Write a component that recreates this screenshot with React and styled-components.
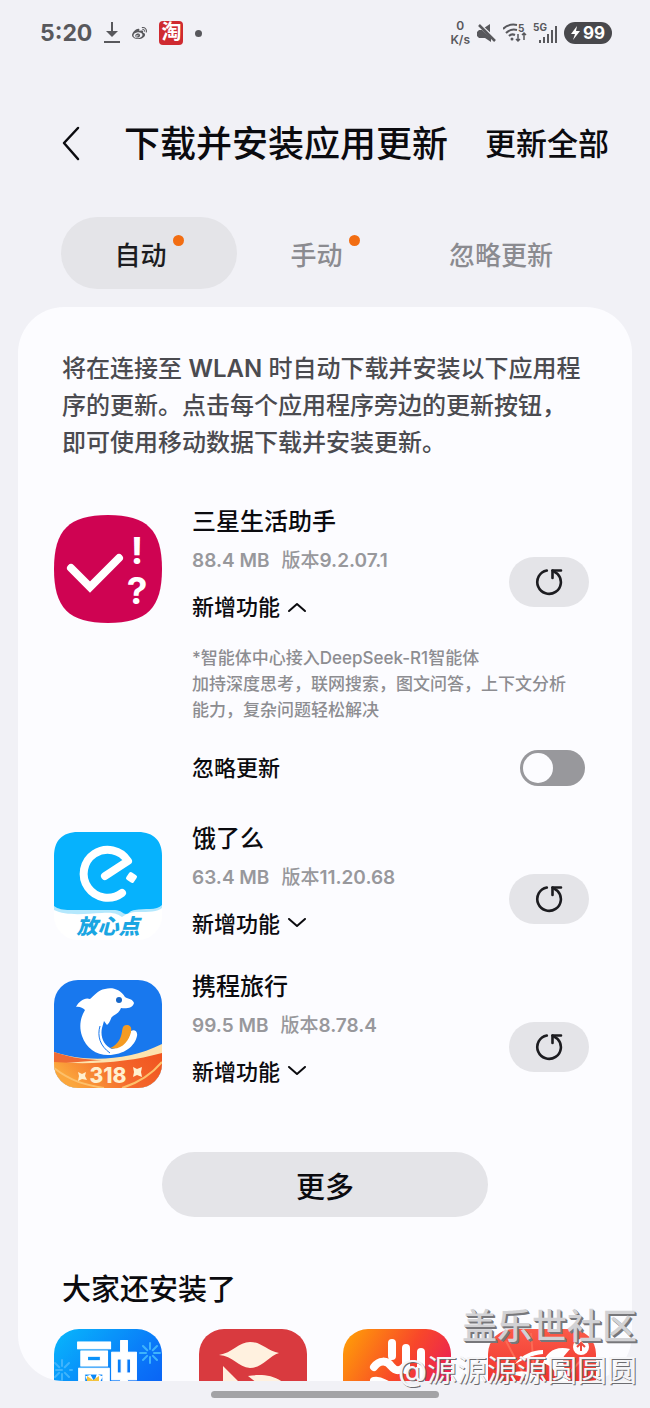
import React, { useState } from "react";
import styled, { createGlobalStyle } from "styled-components";
import { FaWeibo } from "react-icons/fa";

const GlobalStyle = createGlobalStyle`
  * {
    box-sizing: border-box;
  }

  body {
    margin: 0;
    background-color: #f1f1f6;
    font-family: Inter, "Noto Sans CJK SC", sans-serif;
    font-weight: 500;
    color: #0b0b0f;
  }

  button {
    border: none;
    padding: 0;
    background: none;
    color: inherit;
    font: inherit;
    cursor: pointer;
  }

  h1, h2, h3, p {
    margin: 0;
    font-weight: 500;
  }

  b {
    font-weight: 600;
  }

  svg {
    display: block;
    flex-shrink: 0;
  }
`;

const Screen = styled.div`
  position: relative;
  display: flex;
  flex-direction: column;
  height: 100vh;
  overflow: hidden;
`;

const StatusBar = styled.div`
  display: flex;
  justify-content: space-between;
  align-items: center;
  height: 66px;
  flex-shrink: 0;
  padding: 0 38px 0 40px;
  color: #58585c;
`;

const StatusGroup = styled.div`
  display: flex;
  align-items: center;
  gap: ${(props) => props.$gap}px;
`;

const Clock = styled.span`
  font-size: 23px;
  font-weight: 700;
`;

const TaobaoBadge = styled.span`
  width: 24px;
  height: 24px;
  border-radius: 4px;
  background-color: #cf2a30;
  color: white;
  font-size: 20px;
  font-weight: 700;
  line-height: 23px;
  text-align: center;
`;

const Dot = styled.span`
  width: ${(props) => props.$size}px;
  height: ${(props) => props.$size}px;
  border-radius: 50%;
  background-color: ${(props) => props.$color};
`;

const NetSpeed = styled.span`
  font-size: 12px;
  font-weight: 600;
  line-height: 14px;
  text-align: center;
`;

const Battery = styled.span`
  display: flex;
  align-items: center;
  justify-content: center;
  gap: 3px;
  width: 48px;
  height: 22px;
  border-radius: 11px;
  background-color: #48484c;
  color: white;
  font-size: 17px;
  font-weight: 700;
`;

const Header = styled.header`
  display: flex;
  align-items: center;
  height: 72px;
  flex-shrink: 0;
  margin: 42px 41px 37px 61px;
`;

const Title = styled.h1`
  flex: 1;
  margin-left: 43px;
  font-size: 36px;
  line-height: 48px;
  white-space: nowrap;
`;

const UpdateAll = styled.button`
  line-height: 48px;
  white-space: nowrap;

  && {
    font-size: 31px;
  }
`;

const Tabs = styled.nav`
  display: flex;
  flex-shrink: 0;
  margin: 0 61px 18px;
`;

const Tab = styled.button`
  display: flex;
  flex: 1;
  justify-content: center;
  align-items: center;
  gap: 6px;
  height: 72px;
  border-radius: 36px;
  background-color: ${(props) => (props.$active ? "#e4e4e8" : "transparent")};
  color: ${(props) => (props.$active ? "#1c1c20" : "#8b8b90")};

  && {
    font-size: 26px;
  }

  & ${Dot} {
    margin-bottom: 26px;
  }
`;

const Card = styled.main`
  flex: 1;
  min-height: 0;
  margin: 0 18px;
  padding: 43px 36px 0;
  border-radius: 46px;
  background-color: #fcfcff;
  overflow: hidden;
`;

const Description = styled.p`
  margin: 0 8px 43px;
  color: #4b4b50;
  font-size: 24px;
  line-height: 37px;
  white-space: nowrap;
`;

const AppItem = styled.section`
  margin-bottom: 29px;
`;

const AppRow = styled.div`
  display: flex;
  align-items: flex-end;
`;

const AppInfo = styled.div`
  flex: 1;
  margin-left: 30px;
`;

const AppName = styled.h2`
  font-size: 24px;
  line-height: 36px;
`;

const AppMeta = styled.p`
  display: flex;
  gap: 12px;
  margin: 6px 0 15px;
  color: #98989c;
  font-size: 19px;
  line-height: 30px;
`;

const WhatsNew = styled.button`
  display: flex;
  align-items: center;
  gap: 7px;

  && {
    font-size: 22px;
    line-height: 32px;
  }
`;

const RefreshButton = styled.button`
  display: flex;
  justify-content: center;
  align-items: center;
  width: 80px;
  height: 50px;
  margin: 0 7px 16px 0;
  border-radius: 25px;
  background-color: #e4e4e8;
`;

const Details = styled.div`
  margin: 22px 0 0 138px;
  padding-bottom: 6px;
`;

const Notes = styled.p`
  color: #8d8d91;
  font-size: 17px;
  line-height: 26px;
`;

const IgnoreRow = styled.label`
  display: flex;
  justify-content: space-between;
  align-items: center;
  margin: 27px 11px 0 0;
  font-size: 22px;
  line-height: 36px;
`;

const Switch = styled.input`
  appearance: none;
  width: 65px;
  height: 36px;
  margin: 0;
  padding: 3px;
  border-radius: 18px;
  background-color: ${(props) => (props.checked ? "#3e7bf0" : "#98989c")};
  cursor: pointer;

  &::before {
    content: "";
    display: block;
    width: 30px;
    height: 30px;
    margin-left: ${(props) => (props.checked ? "29px" : "0")};
    border-radius: 50%;
    background-color: #fcfcff;
  }
`;

const MoreButton = styled.button`
  display: block;
  width: 60%;
  height: 65px;
  margin: 64px auto 52px;
  border-radius: 33px;
  background-color: #e4e4e8;

  && {
    font-size: 29px;
  }
`;

const SectionTitle = styled.h3`
  margin: 0 8px 18px;
  font-size: 29px;
  line-height: 42px;
`;

const Shelf = styled.div`
  display: flex;
  justify-content: space-between;
`;

const HomeArea = styled.footer`
  display: flex;
  justify-content: center;
  align-items: center;
  flex-shrink: 0;
  height: 27px;
`;

const HomeBar = styled.div`
  width: 35%;
  height: 7px;
  border-radius: 4px;
  background-color: #a3a3a6;
`;

const Watermark = styled.div`
  position: absolute;
  right: 13px;
  bottom: 16px;
  color: #f6f6f8;
  font-size: 30px;
  font-weight: 400;
  line-height: 44px;
  text-align: right;
  text-shadow: 1px 1px 0 #6c6c70;
  pointer-events: none;
`;

const WatermarkTitle = styled.div`
  color: #d2d2d5;
  font-size: 35px;
  font-weight: 500;
  text-shadow: 1px 1px 0 #77777b, 2px 2px 0 #77777b;
`;

function SignalIcons() {
  return (
    <>
      <svg width="19" height="19" viewBox="0 0 19 19" fill="currentColor">
        <path d="M0 8l2-2h3l9 8v4l-6-4H2l-2-2zM7 4l6-4v9z" />
        <path d="M3 0l17 16" stroke="#f1f1f6" strokeWidth="1.500" />
        <path d="M2 1l16 16" stroke="currentColor" strokeWidth="2.500" />
      </svg>
      <svg width="24" height="20" viewBox="0 0 24 20" fill="none" stroke="currentColor" strokeWidth="2">
        <path d="M0 6C4 2 9 1 14 2M3 10c3-3 7-4 11-3M6 13c2-2 4-2 6-1" />
        <circle cx="9" cy="16" r="1.500" fill="currentColor" stroke="none" />
        <path d="M15 11v7m-2-2l2 2 2-2M21 17v-7m-2 2l2-2 2 2" strokeWidth="1.500" />
        <text x="15" y="9" fill="currentColor" stroke="none" fontSize="10" fontWeight="700">5</text>
      </svg>
      <svg width="23" height="22" viewBox="0 0 23 22" fill="currentColor" overflow="visible">
        <text x="-1" y="9" fontSize="10" fontWeight="700">5G</text>
        <path d="M5 18h2v3H5zM9 15h2v6H9zM13 12h2v9h-2zM17 8h2v13h-2zM21 4h2v17h-2z" />
      </svg>
    </>
  );
}

function Chevron({ up }) {
  return (
    <svg width="20" height="12" viewBox="0 0 20 12" fill="none" stroke="currentColor" strokeWidth="2" strokeLinecap="round" strokeLinejoin="round">
      <path d={up ? "M2 10l8-7 8 7" : "M2 1l8 7 8-7"} />
    </svg>
  );
}

function RefreshIcon() {
  return (
    <svg width="28" height="28" viewBox="0 0 28 28" fill="none" stroke="#1c1c20" strokeWidth="2.600" strokeLinecap="round" strokeLinejoin="round">
      <path d="M11.800 2.500A11.800 11.800 0 1 0 22.500 5.800L17.500 2.500" />
      <path d="M17.500 10V2.500H26" />
    </svg>
  );
}

function SamsungIcon() {
  return (
    <svg width="108" height="108" viewBox="0 0 108 108">
      <path d="M54 0C93 0 108 15 108 54S93 108 54 108 0 93 0 54 15 0 54 0Z" fill="#cf0352" />
      <path d="M17 53l19 19 29-29" fill="none" stroke="white" strokeWidth="8" strokeLinecap="round" />
      <g fill="white" fontSize="37" fontWeight="700" textAnchor="middle">
        <text x="83" y="49">!</text>
        <text x="83" y="89">?</text>
      </g>
    </svg>
  );
}

function ElemeIcon() {
  return (
    <svg width="108" height="108" viewBox="0 0 108 108">
      <rect width="108" height="108" rx="24" fill="white" />
      <path d="M0 60v18c12 6 30 4 48 3 14-1 16 2 20 4 4-3 9-5 16-5 10 0 20 0 24-4V60z" fill="#b4e8fd" />
      <path d="M24 0h60c16 0 24 9 24 24v49c-5 6-18 3-27 5-5 0-6 4-9 4s-5-4-11-4H16C9 78 4 77 0 74V24C0 9 8 0 24 0z" fill="#06b2fd" />
      <path d="M68 61A24 24 0 1 1 74 29L51 44" fill="none" stroke="white" strokeWidth="8" strokeLinecap="round" strokeLinejoin="round" />
      <rect x="73" y="41" width="9" height="9" rx="2" fill="white" transform="rotate(35 77.500 45.500)" />
      <text x="54" y="102" fill="#1aa6e2" fontSize="21" fontWeight="900" fontStyle="italic" textAnchor="middle">放心点</text>
    </svg>
  );
}

function CtripIcon() {
  return (
    <svg width="108" height="108" viewBox="0 0 108 108">
      <defs>
        <clipPath id="ctripClip">
          <rect width="108" height="108" rx="24" />
        </clipPath>
        <linearGradient id="ctripBand" x1="0" x2="1" y1="0.300" y2="0">
          <stop offset="0" stopColor="#fba63c" />
          <stop offset="0.500" stopColor="#f4682c" />
          <stop offset="1" stopColor="#f0531f" />
        </linearGradient>
      </defs>
      <g clipPath="url(#ctripClip)">
        <rect width="108" height="108" fill="#1878ee" />
        <path d="M0 72c30 10 72 10 108-8v44H0z" fill="#fde3ae" />
        <path d="M0 72c18 6 34 8 48 8L0 84z" fill="#ee6a35" />
        <path d="M0 82c38 3 76 0 108-9v35H0z" fill="url(#ctripBand)" />
        <path d="M0 88c18 14 32 17 50 20M108 82C98 94 84 103 68 108" fill="none" stroke="#fdc06a" strokeWidth="2" />
        <path d="M80 23C79 19 74 19 71 17 66 9 58 7 51 9 44 10 40 16 36 19 31 17 25 21 22 27c3-1 7 1 9 3-5 8-6 17-3 26 4 12 14 19 26 19 16 0 27-9 29-19 1-5-3-7-6-5-3 9-9 16-19 18-8-3-12-12-10-21l2-7 3 4c4-3 3-7 6-9 4-2 7-5 8-8 5 1 12 0 13-5z" fill="white" />
        <path d="M73 45c-6 0-4 6-6 11-2 6-6 10-11 12 11 3 19-7 21-16 1-5-1-7-4-7z" fill="#f49b22" />
        <path d="M46 46c-3 10 0 20 10 27" fill="none" stroke="#1878ee" strokeWidth="1" />
        <circle cx="65" cy="20" r="3" fill="#1767c8" />
      </g>
      <text x="54" y="103" fill="#fff0cf" fontSize="21" fontWeight="800" textAnchor="middle">318</text>
      <path d="M24 92l4 2 4-2-1 4 2 4-5-1-4 2 1-5zM79 87l4 2 5-2-1 5 1 5-5-2-4 2 1-5z" fill="#fff0cf" />
    </svg>
  );
}

function FinanceIcon() {
  return (
    <svg width="108" height="108" viewBox="0 0 108 108">
      <defs>
        <linearGradient id="finance" x1="0" x2="1" y1="0" y2="1">
          <stop offset="0" stopColor="#08b8fc" />
          <stop offset="0.600" stopColor="#0a70f8" />
          <stop offset="1" stopColor="#0a50f0" />
        </linearGradient>
      </defs>
      <rect width="108" height="108" rx="25" fill="url(#finance)" />
      <g stroke="#3fb4fc" strokeWidth="2" strokeLinecap="round" strokeDasharray="6 8">
        <path d="M96 14v20M86 24h20M89 17l14 14M103 17L89 31M8 31v20M2 41h16M1 34l14 14M15 34L1 48" />
      </g>
      <text x="54" y="67" fill="white" stroke="white" strokeWidth="1" strokeLinejoin="round" fontSize="66" fontWeight="700" textAnchor="middle">融</text>
      <path d="M33 54v-7l6 4 6-4v7z" fill="#f4c33e" />
    </svg>
  );
}

function LeafIcon() {
  return (
    <svg width="108" height="108" viewBox="0 0 108 108">
      <rect width="108" height="108" rx="25" fill="#d93a3f" />
      <path d="M20 26c13-2 20-13 31-13 12 0 17 9 29 11-10 3-17 15-29 15-12-1-17-12-31-13zM24 37l17 17H24zM49 47c13-2 26-1 36 7H58z" fill="#fff1df" />
    </svg>
  );
}

function HandIcon() {
  return (
    <svg width="108" height="108" viewBox="0 0 108 108">
      <defs>
        <linearGradient id="hand" x1="0" x2="1" y1="0.100" y2="0.700">
          <stop offset="0" stopColor="#ff9c08" />
          <stop offset="0.500" stopColor="#f8472a" />
          <stop offset="1" stopColor="#e51264" />
        </linearGradient>
      </defs>
      <rect width="108" height="108" rx="25" fill="url(#hand)" />
      <path d="M49 14v13M63 19v22M78 23v31M31 38c5-7 13-7 17-1 5 6 10 5 14 0M31 52c9-2 10 6 22 5" fill="none" stroke="white" strokeWidth="8" strokeLinecap="round" />
    </svg>
  );
}

function BirdIcon() {
  return (
    <svg width="108" height="108" viewBox="0 0 108 108">
      <defs>
        <linearGradient id="bird" x1="0" x2="0" y1="0" y2="0.500">
          <stop offset="0" stopColor="#fb5b48" />
          <stop offset="1" stopColor="#ef322d" />
        </linearGradient>
      </defs>
      <rect width="108" height="108" rx="25" fill="url(#bird)" />
      <path d="M18 12l22 42M43 4l4 50M96 28L72 54" stroke="#fb6a55" strokeWidth="2" />
      <path d="M27 35c7-9 17-14 28-14v4c-11 1-19 5-28 10zM55 34c3-10 12-18 27-14l-6 7c-3 6 2 15 5 27H70c-1-10-5-17-15-20zM20 46c12-7 26-4 36 8H44c-8-6-15-9-24-8z" fill="white" />
      <circle cx="93" cy="18" r="8" fill="white" />
      <path d="M93 22v-8m-4 4l4-4 4 4" fill="none" stroke="#ef4a3c" strokeWidth="2" />
    </svg>
  );
}

const apps = [
  {
    name: "三星生活助手",
    size: "88.4 MB",
    version: "9.2.07.1",
    Icon: SamsungIcon,
    notes: [
      "*智能体中心接入DeepSeek-R1智能体",
      "加持深度思考，联网搜索，图文问答，上下文分析",
      "能力，复杂问题轻松解决",
    ],
  },
  { name: "饿了么", size: "63.4 MB", version: "11.20.68", Icon: ElemeIcon },
  { name: "携程旅行", size: "99.5 MB", version: "8.78.4", Icon: CtripIcon },
];

const tabs = [
  { label: "自动", dot: true },
  { label: "手动", dot: true },
  { label: "忽略更新", dot: false },
];

function AppEntry({ app }) {
  const [open, setOpen] = useState(Boolean(app.notes));
  const [ignored, setIgnored] = useState(false);
  const { Icon } = app;

  return (
    <AppItem>
      <AppRow>
        <Icon />
        <AppInfo>
          <AppName>{app.name}</AppName>
          <AppMeta>
            <b>{app.size}</b>
            <span>
              版本<b>{app.version}</b>
            </span>
          </AppMeta>
          <WhatsNew aria-expanded={open} onClick={() => setOpen(!open)}>
            新增功能
            <Chevron up={open} />
          </WhatsNew>
        </AppInfo>
        <RefreshButton aria-label="更新">
          <RefreshIcon />
        </RefreshButton>
      </AppRow>
      {open && (
        <Details>
          {app.notes?.map((line) => (
            <Notes key={line}>{line}</Notes>
          ))}
          <IgnoreRow>
            忽略更新
            <Switch
              type="checkbox"
              checked={ignored}
              onChange={() => setIgnored(!ignored)}
            />
          </IgnoreRow>
        </Details>
      )}
    </AppItem>
  );
}

export default function App() {
  const [activeTab, setActiveTab] = useState("自动");

  return (
    <Screen>
      <GlobalStyle />
      <StatusBar>
        <StatusGroup $gap={12}>
          <Clock>5:20</Clock>
          <svg width="16" height="22" viewBox="0 0 16 22" fill="none" stroke="currentColor" strokeWidth="2">
            <path d="M8 0v10" strokeWidth="2" />
            <path d="M2 9h12l-6 6z" fill="currentColor" stroke="none" />
            <path d="M0 20h16" />
          </svg>
          <FaWeibo size={15} />
          <TaobaoBadge>淘</TaobaoBadge>
          <Dot $size={7} $color="#58585c" />
        </StatusGroup>
        <StatusGroup $gap={7}>
          <NetSpeed>
            0<br />
            K/s
          </NetSpeed>
          <SignalIcons />
          <Battery>
            <svg width="9" height="14" viewBox="0 0 9 14" fill="currentColor">
              <path d="M6 0L0 8h4l-2 6 7-9H5z" />
            </svg>
            99
          </Battery>
        </StatusGroup>
      </StatusBar>
      <Header>
        <button aria-label="返回">
          <svg width="20" height="36" viewBox="0 0 20 36" fill="none" stroke="currentColor" strokeWidth="2.500" strokeLinecap="round" strokeLinejoin="round">
            <path d="M17 2L3 17l14 16" />
          </svg>
        </button>
        <Title>下载并安装应用更新</Title>
        <UpdateAll>更新全部</UpdateAll>
      </Header>
      <Tabs>
        {tabs.map(({ label, dot }) => (
          <Tab
            key={label}
            $active={label === activeTab}
            onClick={() => setActiveTab(label)}
          >
            {label}
            {dot && <Dot $size={11} $color="#f26d12" />}
          </Tab>
        ))}
      </Tabs>
      <Card>
        <Description>
          将在连接至 <b>WLAN</b> 时自动下载并安装以下应用程
          <br />
          序的更新。点击每个应用程序旁边的更新按钮，
          <br />
          即可使用移动数据下载并安装更新。
        </Description>
        {apps.map((app) => (
          <AppEntry key={app.name} app={app} />
        ))}
        <MoreButton>更多</MoreButton>
        <SectionTitle>大家还安装了</SectionTitle>
        <Shelf>
          <FinanceIcon />
          <LeafIcon />
          <HandIcon />
          <BirdIcon />
        </Shelf>
      </Card>
      <HomeArea>
        <HomeBar />
      </HomeArea>
      <Watermark>
        <WatermarkTitle>盖乐世社区</WatermarkTitle>
        @源源源源圆圆圆
      </Watermark>
    </Screen>
  );
}
